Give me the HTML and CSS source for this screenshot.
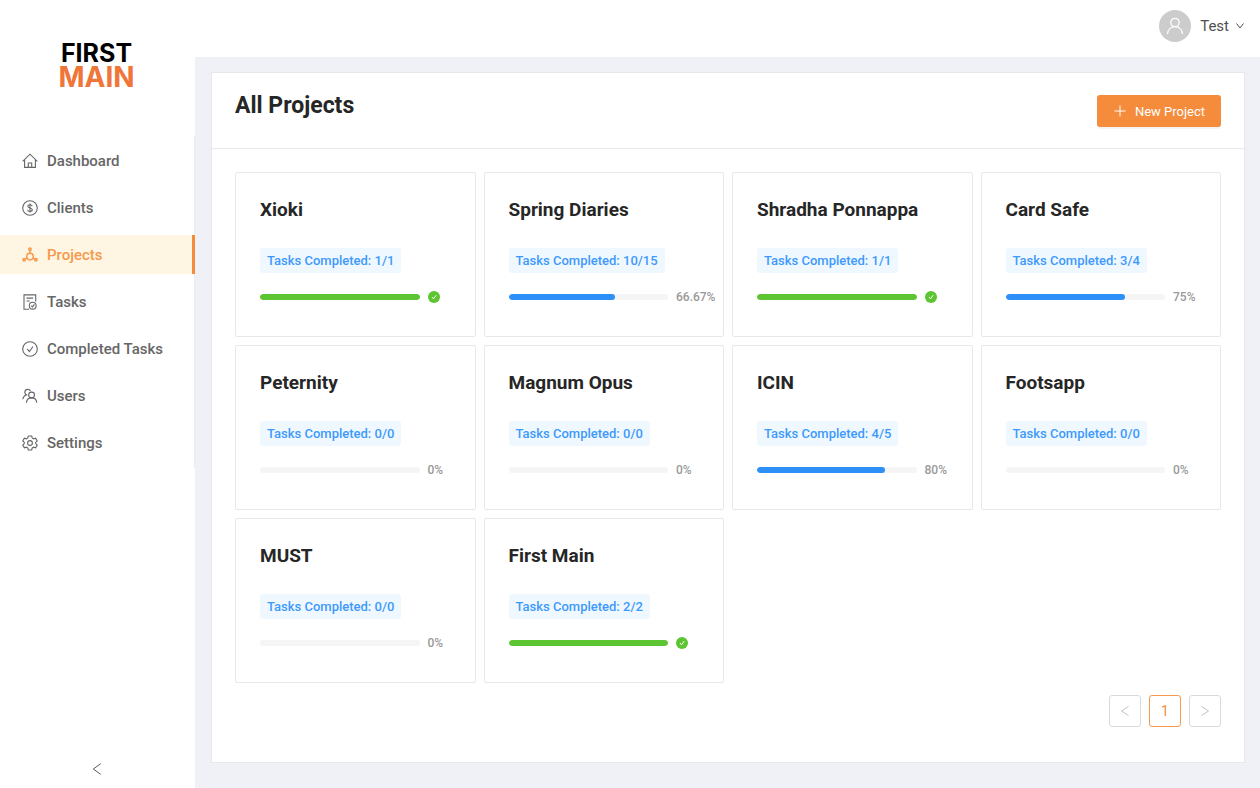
FILE: index.html
```html
<!DOCTYPE html>
<html lang="en">
<head>
<meta charset="utf-8">
<meta name="viewport" content="width=device-width, initial-scale=1">
<title>All Projects</title>
<link rel="stylesheet" href="styles.css">
</head>
<body>
<div class="layout">
  <aside class="sidebar">
    <div class="logo"><span class="logo-top">FIRST</span><span class="logo-bottom">MAIN</span></div>
    <nav class="menu">
      <a class="menu-item" href="#"><svg class="icon" viewBox="0 0 16 16"><path d="M.7 8.3 8 1.2l7.3 7.1M2.6 7v7.4h10.8V7M6.3 14.2V10h3.4v4.2"/></svg>Dashboard</a>
      <a class="menu-item" href="#"><svg class="icon" viewBox="0 0 16 16"><circle cx="8" cy="8" r="7.3"/><path d="M10.2 6.1C10 5.100 9.100 4.700 8 4.700c-1.300 0-2.200.6-2.200 1.600C5.800 8.600 10.300 7.300 10.300 9.700c0 1-.9 1.700-2.300 1.700-1.400 0-2.300-.7-2.400-1.700M8 3.500v9"/></svg>Clients</a>
      <a class="menu-item active" href="#"><svg class="icon icon-bold" viewBox="0 0 16 16"><circle cx="8" cy="2.300" r="1.200"/><circle cx="2.100" cy="12.800" r="1.200"/><circle cx="13.900" cy="12.800" r="1.200"/><circle cx="8" cy="9.600" r="3.300"/><path d="M8 3.500v2.800M3.100 12.200l2-1.100M12.900 12.200l-2-1.100"/></svg>Projects</a>
      <a class="menu-item" href="#"><svg class="icon" viewBox="0 0 16 16"><path d="M7 15.200H2V.9h11.700v6.600M4.500 4.100h6.700M4.500 7h3.200"/><circle cx="10.700" cy="11.700" r="3.400"/><path d="m9.200 11.700 1.200 1.200 2-2.500"/></svg>Tasks</a>
      <a class="menu-item" href="#"><svg class="icon" viewBox="0 0 16 16"><circle cx="8" cy="8" r="7.300"/><path d="m5.200 7.900 2.200 2.600 3.600-5"/></svg>Completed Tasks</a>
      <a class="menu-item" href="#"><svg class="icon" viewBox="0 0 16 16"><circle cx="9.600" cy="7" r="2.900"/><path d="M4.400 14.700c.3-2.900 2.500-4.800 5.200-4.800s4.900 1.900 5.200 4.800M5.300 7.300C3.700 6.900 2.800 5.800 2.800 4.300c0-1.700 1.300-2.900 3-2.900 1.300 0 2.300.7 2.800 1.800M.8 11.300c.2-2 1.400-3.600 3.200-4.400"/></svg>Users</a>
      <a class="menu-item" href="#"><svg class="icon" viewBox="0 0 16 16"><path d="M6.300 1h3.400l.5 2 1.300.8 2.100-.6 1.600 2.800-1.500 1.400v1.200l1.500 1.400-1.600 2.800-2.100-.6-1.300.8-.5 2H6.300l-.5-2-1.300-.8-2.100.6L.8 10l1.500-1.400V7.400L.8 6l1.600-2.800 2.100.6L5.800 3z"/><circle cx="8" cy="8" r="2.400"/></svg>Settings</a>
    </nav>
    <button class="collapse" type="button" aria-label="Collapse menu"><svg class="icon-small" viewBox="0 0 14 14"><path d="M10.700 1.700 3.300 7l7.400 5.300"/></svg></button>
  </aside>
  <div class="page">
    <header class="topbar">
      <button class="account" type="button">
        <span class="avatar"><svg class="icon-avatar" viewBox="0 0 18 18"><circle cx="9" cy="5.500" r="4.200"/><path d="M1.500 17c.4-4.500 3.500-7.300 7.500-7.300s7.100 2.800 7.500 7.300"/></svg></span>
        <span>Test</span>
        <svg class="icon-caret" viewBox="0 0 10 10"><path d="m1.500 2.500 3.500 4.500 3.500-4.500"/></svg>
      </button>
    </header>
    <main class="panel">
      <div class="panel-head">
        <h1 class="panel-title">All Projects</h1>
        <button class="new-project" type="button"><svg class="icon-small" viewBox="0 0 14 14"><path d="M7 1.500v11M1.500 7h11"/></svg>New Project</button>
      </div>
      <div class="panel-body">
        <div class="projects">
          <article class="card"><h2 class="card-title">Xioki</h2><span class="tag">Tasks Completed: 1/1</span><div class="progress"><div class="track"><div class="fill done" style="width:100%"></div></div><svg class="check" viewBox="0 0 12 12"><circle cx="6" cy="6" r="6"/><path d="m4 6 1.500 1.800L8.200 4.200"/></svg></div></article>
          <article class="card"><h2 class="card-title">Spring Diaries</h2><span class="tag">Tasks Completed: 10/15</span><div class="progress"><div class="track"><div class="fill" style="width:66.67%"></div></div><span class="percent">66.67%</span></div></article>
          <article class="card"><h2 class="card-title">Shradha Ponnappa</h2><span class="tag">Tasks Completed: 1/1</span><div class="progress"><div class="track"><div class="fill done" style="width:100%"></div></div><svg class="check" viewBox="0 0 12 12"><circle cx="6" cy="6" r="6"/><path d="m4 6 1.500 1.800L8.200 4.200"/></svg></div></article>
          <article class="card"><h2 class="card-title">Card Safe</h2><span class="tag">Tasks Completed: 3/4</span><div class="progress"><div class="track"><div class="fill" style="width:75%"></div></div><span class="percent">75%</span></div></article>
          <article class="card"><h2 class="card-title">Peternity</h2><span class="tag">Tasks Completed: 0/0</span><div class="progress"><div class="track"></div><span class="percent">0%</span></div></article>
          <article class="card"><h2 class="card-title">Magnum Opus</h2><span class="tag">Tasks Completed: 0/0</span><div class="progress"><div class="track"></div><span class="percent">0%</span></div></article>
          <article class="card"><h2 class="card-title">ICIN</h2><span class="tag">Tasks Completed: 4/5</span><div class="progress"><div class="track"><div class="fill" style="width:80%"></div></div><span class="percent">80%</span></div></article>
          <article class="card"><h2 class="card-title">Footsapp</h2><span class="tag">Tasks Completed: 0/0</span><div class="progress"><div class="track"></div><span class="percent">0%</span></div></article>
          <article class="card"><h2 class="card-title">MUST</h2><span class="tag">Tasks Completed: 0/0</span><div class="progress"><div class="track"></div><span class="percent">0%</span></div></article>
          <article class="card"><h2 class="card-title">First Main</h2><span class="tag">Tasks Completed: 2/2</span><div class="progress"><div class="track"><div class="fill done" style="width:100%"></div></div><svg class="check" viewBox="0 0 12 12"><circle cx="6" cy="6" r="6"/><path d="m4 6 1.500 1.800L8.200 4.200"/></svg></div></article>
        </div>
        <nav class="pagination" aria-label="Pages">
          <button class="page-button" type="button" aria-label="Previous page" disabled><svg class="icon-page" viewBox="0 0 12 12"><path d="M9.500 1.500 2.500 6l7 4.500"/></svg></button>
          <button class="page-button current" type="button">1</button>
          <button class="page-button" type="button" aria-label="Next page" disabled><svg class="icon-page" viewBox="0 0 12 12"><path d="m2.500 1.500 7 4.500-7 4.500"/></svg></button>
        </nav>
      </div>
    </main>
  </div>
</div>
</body>
</html>
```
FILE: styles.css
```css
* { box-sizing: border-box; }
body {
  margin: 0;
  font-family: Roboto, "Noto Sans", sans-serif;
  color: #262626;
  background: #f0f1f6;
}
button { font-family: inherit; cursor: pointer; }
svg { fill: none; stroke: currentColor; flex: none; }
.layout { display: flex; min-height: 100vh; }

.sidebar {
  width: 195px;
  flex: none;
  display: flex;
  flex-direction: column;
  background: #fff;
}
.logo {
  display: flex;
  flex-direction: column;
  align-items: center;
  height: 136px;
  padding: 42px 2px 0 0;
  font-family: Inter, sans-serif;
  font-weight: 700;
}
.logo-top { font-size: 25px; line-height: 23px; color: #000; }
.logo-bottom { font-size: 28px; line-height: 25px; color: #f07538; }
.menu {
  display: flex;
  flex-direction: column;
  gap: 8px;
  padding: 5px 0 6px;
  border-right: 1px solid #ececf0;
}
.menu-item {
  display: flex;
  align-items: center;
  gap: 9px;
  height: 39px;
  padding-left: 22px;
  font-size: 15px;
  font-weight: 500;
  color: #666;
  text-decoration: none;
}
.menu-item.active {
  margin-right: -1px;
  border-right: 3px solid #f48c3c;
  background: #fff5e3;
  color: #f59a4d;
}
.icon { width: 16px; height: 16px; stroke-width: 1.1; }
.icon-bold { stroke-width: 1.5; }
.collapse {
  margin-top: auto;
  height: 36px;
  padding: 0 2px 0 0;
  border: 0;
  background: none;
  color: #595959;
}
.icon-small { width: 14px; height: 14px; }

.page { flex: 1; min-width: 0; }
.topbar {
  display: flex;
  justify-content: flex-end;
  height: 57px;
  padding: 10px 15px 0 0;
  background: #fff;
}
.account {
  display: flex;
  align-items: center;
  height: 32px;
  padding: 0;
  border: 0;
  background: none;
  font-size: 15px;
  color: #505050;
}
.avatar {
  display: flex;
  align-items: center;
  justify-content: center;
  width: 32px;
  height: 32px;
  margin-right: 9px;
  border-radius: 50%;
  background: #ccc;
  color: #fff;
}
.icon-avatar { width: 18px; height: 18px; stroke-width: 1.3; }
.icon-caret { width: 10px; height: 10px; margin-left: 6px; }

.panel {
  margin: 15px 15px 25px 16px;
  border: 1px solid #e8e8ea;
  background: #fff;
}
.panel-head {
  display: flex;
  justify-content: space-between;
  align-items: flex-start;
  height: 76px;
  padding: 16px 23px 0;
  border-bottom: 1px solid #e8e8e8;
}
.panel-title { margin: 0; font-size: 23px; line-height: 34px; font-weight: 700; }
.new-project {
  display: flex;
  align-items: center;
  gap: 8px;
  height: 32px;
  margin-top: 6px;
  padding: 0 16px;
  border: 0;
  border-radius: 3px;
  background: #f48c3c;
  box-shadow: 0 2px 1px #0000000d;
  color: #fff;
  font-size: 13px;
}
.panel-body { padding: 23px 23px 35px; }
.projects {
  display: grid;
  grid-template-columns: repeat(4, minmax(0, 1fr));
  gap: 8px;
}
.card {
  height: 165px;
  padding: 23px 24px;
  border: 1px solid #e8e8e8;
  border-radius: 2px;
}
.card-title { margin: 0 0 25px; font-size: 19px; line-height: 27px; font-weight: 700; }
.tag {
  display: block;
  width: fit-content;
  padding: 0 7px;
  border-radius: 3px;
  background: #f0f8ff;
  color: #3d9afc;
  font-size: 13px;
  line-height: 25px;
  font-weight: 500;
  white-space: nowrap;
}
.progress {
  display: grid;
  grid-template-columns: minmax(0, 1fr) 23px;
  gap: 8px;
  align-items: center;
  height: 16px;
  margin-top: 16px;
}
.track { height: 6px; border-radius: 3px; background: #f5f5f5; overflow: hidden; }
.fill { height: 6px; border-radius: 3px; background: #2d8ff8; }
.fill.done { background: #5cc531; }
.percent { font-size: 12px; line-height: 16px; font-weight: 500; color: #999; white-space: nowrap; }
.check { width: 12px; height: 12px; color: #fff; }
.check circle { fill: #5cc531; stroke: none; }

.pagination {
  display: flex;
  justify-content: flex-end;
  gap: 8px;
  margin-top: 12px;
}
.page-button {
  display: flex;
  align-items: center;
  justify-content: center;
  width: 32px;
  height: 32px;
  padding: 0;
  border: 1px solid #d9d9d9;
  border-radius: 3px;
  background: #fff;
  color: #c4c4c4;
  font-size: 14px;
}
.page-button.current { border-color: #f59a50; color: #f48c3c; }
.icon-page { width: 12px; height: 12px; }
```
